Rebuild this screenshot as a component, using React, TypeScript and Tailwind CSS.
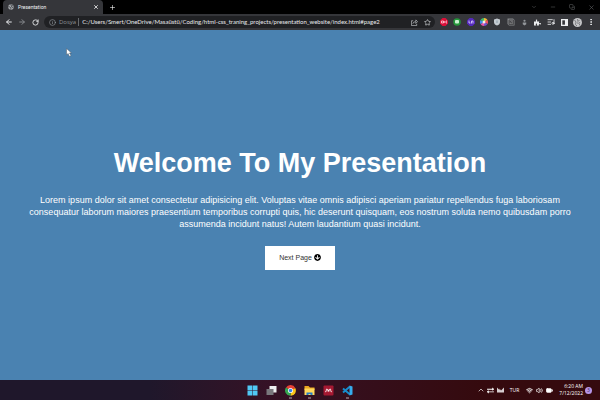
import type { ReactNode } from "react";
import {
  ArrowLeft, ArrowRight, BatteryMedium, ChevronDown, ChevronUp, Copy, Info, ListMusic,
  Minus, MoreVertical, Plus, RotateCw, Star, Volume2, Wifi, X,
} from "lucide-react";
import { FaArrowCircleDown, FaExchangeAlt, FaPuzzlePiece } from "react-icons/fa";

function IconButton({ label, children, className = "w-2" }: { label: string; children: ReactNode; className?: string }) {
  return (
    <button type="button" aria-label={label} className={`flex h-3 shrink-0 items-center justify-center ${className}`}>
      {children}
    </button>
  );
}

function TabStrip() {
  return (
    <header className="flex h-[14px] shrink-0 items-stretch bg-black pl-[3px] pr-[5px] text-white">
      <div className="flex w-[100px] items-center gap-1 rounded-t bg-[#35363a] pl-[5px] pr-[3px]">
        <svg viewBox="0 0 12 12" className="size-[6px] shrink-0">
          <circle cx="6" cy="6" r="5.5" fill="#a5a9ac" />
          <path d="M1 5l3 1 2 2-1 3M5 1l1 2 2 1-1 2 4 2M8 1l1 2 2 1" stroke="#35363a" strokeWidth="1.3" fill="none" />
        </svg>
        <span className="flex-1 font-['Roboto',sans-serif] text-[5px] leading-[8px] text-[#f1f3f4]">Presentation</span>
        <IconButton label="Close tab"><X className="size-[6px]" strokeWidth={3} /></IconButton>
      </div>
      <IconButton label="New tab" className="ml-[5px] w-2 self-center"><Plus className="size-[7px]" strokeWidth={2} /></IconButton>
      <div className="ml-auto flex items-center gap-[11px] text-[#626467]">
        <IconButton label="Search tabs"><ChevronDown className="size-[6px]" /></IconButton>
        <IconButton label="Minimize"><Minus className="size-[6px]" /></IconButton>
        <IconButton label="Restore"><Copy className="size-[6px] -scale-x-100 rotate-90" /></IconButton>
        <IconButton label="Close window"><X className="size-[7px]" /></IconButton>
      </div>
    </header>
  );
}

function Extensions() {
  return (
    <div className="ml-[5px] flex w-[155px] shrink-0 items-center justify-between text-[#eceef0]">
      <IconButton label="Ad blocker">
        <svg viewBox="0 0 16 16" className="size-2">
          <path d="M5 0h6l5 5v6l-5 5H5l-5-5V5z" fill="#db1038" />
          <path d="M6 6H3v4h3M7 6v4h1q2-2 0-4zM14 6h-2v4h2" stroke="#ffdce3" strokeWidth="1.5" fill="none" />
        </svg>
      </IconButton>
      <IconButton label="Page tools">
        <svg viewBox="0 0 16 16" className="size-2">
          <circle cx="8" cy="8" r="7.5" fill="#24963a" />
          <rect x="4" y="4" width="8" height="7" rx="2" fill="#c9efd0" />
        </svg>
      </IconButton>
      <IconButton label="Link extension">
        <svg viewBox="0 0 16 16" className="size-2">
          <path d="M5 0h6l5 5v6l-5 5H5l-5-5V5z" fill="#5429bb" />
          <path d="M4 5v5h3M9 11V6h3v5" stroke="#d7c8ff" strokeWidth="1.8" fill="none" />
        </svg>
      </IconButton>
      <IconButton label="Color picker">
        <svg viewBox="0 0 16 16" className="size-2">
          <path d="M8 8V0a8 8 0 0 1 7 4z" fill="#f4bf35" />
          <path d="M8 8l7-4a8 8 0 0 1 0 8z" fill="#ef5362" />
          <path d="M8 8l7 4a8 8 0 0 1-7 4z" fill="#7754cf" />
          <path d="M8 8v8a8 8 0 0 1-7-4z" fill="#e75aaa" />
          <path d="M8 8l-7 4a8 8 0 0 1 0-8z" fill="#3f91ea" />
          <path d="M8 8L1 4a8 8 0 0 1 7-4z" fill="#43bb6b" />
          <circle cx="8" cy="8" r="3" fill="#f1f1ea" />
        </svg>
      </IconButton>
      <IconButton label="Privacy shield">
        <svg viewBox="0 0 16 16" className="size-2">
          <path d="M8 1l6 2v5q0 5-6 7-6-2-6-7V3z" fill="#c4cbd1" />
          <path d="M8 5v5" stroke="#8c9da9" strokeWidth="2" />
        </svg>
      </IconButton>
      <IconButton label="Notes">
        <svg viewBox="0 0 16 16" className="size-2">
          <path d="M1 1h11l3 3v11H4l-3-3z" fill="#858789" />
          <path d="M4 4h9v9H4zM6 11V6l4 5V6" stroke="#292a2d" strokeWidth="1.2" fill="none" />
        </svg>
      </IconButton>
      <IconButton label="Downloader">
        <svg viewBox="0 0 16 16" className="size-[7px]" fill="#92969a">
          <circle cx="8" cy="4" r="2.5" /><path d="M4 8h8v4l-4 3-4-3z" />
        </svg>
      </IconButton>
      <IconButton label="Extensions"><FaPuzzlePiece className="size-[7px]" /></IconButton>
      <IconButton label="Media controls"><ListMusic className="size-2" strokeWidth={2.5} /></IconButton>
      <IconButton label="Side panel">
        <svg viewBox="0 0 16 16" className="size-[7px]">
          <rect x="1.5" y="1.5" width="13" height="13" fill="none" stroke="currentColor" strokeWidth="3" />
          <path d="M9 2h5v12H9z" fill="currentColor" />
        </svg>
      </IconButton>
      <IconButton label="Profile">
        <svg viewBox="0 0 18 18" className="size-[9px] shrink-0">
          <circle cx="9" cy="9" r="9" fill="#c4c5c7" />
          <path d="M3 4l3 4-1 5 3 3M9 2l1 5 3-3M14 8l-2 3 2 4M8 10h3" stroke="#626367" strokeWidth="1.5" fill="none" />
        </svg>
      </IconButton>
      <IconButton label="Browser menu"><MoreVertical className="size-2" strokeWidth={3} /></IconButton>
    </div>
  );
}

function Toolbar() {
  return (
    <nav aria-label="Browser toolbar" className="flex h-4 shrink-0 items-center bg-[#35363a] px-[5px] text-[#e8eaed]">
      <div className="flex gap-[5px]">
        <IconButton label="Back"><ArrowLeft className="size-2" strokeWidth={3} /></IconButton>
        <IconButton label="Forward"><ArrowRight className="size-2 text-[#85888c]" strokeWidth={3} /></IconButton>
        <IconButton label="Reload"><RotateCw className="size-[7px]" strokeWidth={3} /></IconButton>
      </div>
      <div className="ml-[5px] flex h-3 min-w-0 flex-1 items-center rounded-full bg-[#202124] pl-[5px] pr-[4px] text-[6px] leading-[8px]">
        <Info className="mr-[3px] size-[7px] shrink-0 text-[#9aa0a6]" strokeWidth={2} />
        <label htmlFor="address" className="mr-[3px] border-r border-[#666a6e] pr-[2px] text-[#8e9297]">Dosya</label>
        <input
          id="address"
          className="min-w-0 flex-1 bg-transparent font-['Lato',sans-serif] outline-none"
          defaultValue="C:/Users/Smert/OneDrive/Masaüstü/Coding/html-css_traning_projects/presentation_website/index.html#page2"
        />
        <div className="flex gap-[5px] text-[#c7cacd]">
          <IconButton label="Share">
            <svg viewBox="0 0 16 16" className="size-[7px]" fill="none" stroke="currentColor" strokeWidth="1.5">
              <path d="M5 4H1v11h12v-4M4 11q1-5 7-5V2l4 4-4 4V7" />
            </svg>
          </IconButton>
          <IconButton label="Bookmark"><Star className="size-[7px]" strokeWidth={2.5} /></IconButton>
        </div>
      </div>
      <Extensions />
    </nav>
  );
}

function AppIcons() {
  return (
    <div className="flex items-center gap-2">
      <IconButton label="Start" className="w-[11px]">
        <svg viewBox="0 0 22 22" className="size-[11px]" fill="#50c8f5">
          <path d="M1 1h9.5v9.5H1zM11.5 1H21v9.5h-9.5zM1 11.5h9.5V21H1zM11.5 11.5H21V21h-9.5z" />
        </svg>
      </IconButton>
      <IconButton label="Task view" className="w-[11px]">
        <svg viewBox="0 0 22 22" className="size-[11px]">
          <path d="M7 2h14v13H7z" fill="#eeeeef" /><path d="M1 8h14v12H1z" fill="#79777c" />
        </svg>
      </IconButton>
      <IconButton label="Chrome" className="w-[11px]">
        <svg viewBox="0 -6 22 34" className="h-[17px] w-[11px] shrink-0">
          <path d="M11 11L2 5a10.500 10.500 0 0 1 18.500 1z" fill="#e84235" />
          <path d="M11 11l9.500-5A10.500 10.500 0 0 1 11 21.500z" fill="#fbc21a" />
          <path d="M11 11v10.500A10.500 10.500 0 0 1 2 5z" fill="#36a752" />
          <circle cx="11" cy="11" r="5" fill="#fff" /><circle cx="11" cy="11" r="3.500" fill="#347de8" />
          <path d="M8 25h6v2H8z" fill="#b9a9b1" />
        </svg>
      </IconButton>
      <IconButton label="File Explorer" className="w-[11px]">
        <svg viewBox="0 -6 22 34" className="h-[17px] w-[11px] shrink-0">
          <path d="M1 2h8l3 3h9v5H1z" fill="#eaa720" /><path d="M1 7h20v13H1z" fill="#ffd75c" />
          <path d="M5 20v-5h12v5h-4v-2H9v2z" fill="#257cc7" /><path d="M8 25h6v2H8z" fill="#b9a9b1" />
        </svg>
      </IconButton>
      <IconButton label="Mendeley" className="w-[11px]">
        <svg viewBox="0 0 22 22" className="size-[11px]">
          <rect x="1" y="1" width="20" height="20" rx="2" fill="#a61932" />
          <path d="M4 14q3 0 3-6 4 0 4 5 0-5 4-5 0 6 3 6M8 13l3-3 3 3" stroke="#fff" strokeWidth="1.5" fill="none" />
        </svg>
      </IconButton>
      <IconButton label="Visual Studio Code" className="w-[11px]">
        <svg viewBox="0 -6 22 34" className="h-[17px] w-[11px] shrink-0">
          <path d="M2 7l14 12M2 15L16 3" stroke="#168ccc" strokeWidth="4" />
          <path d="M15 1l6 2v16l-6 2z" fill="#36acec" /><path d="M8 25h6v2H8z" fill="#b9a9b1" />
        </svg>
      </IconButton>
    </div>
  );
}

function Taskbar() {
  return (
    <footer className="grid h-5 shrink-0 grid-cols-[1fr_auto_1fr] items-center bg-linear-to-r from-[#1f172b] from-25% via-[#351125] via-45% to-[#350a0e] to-80% px-2 text-white">
      <div />
      <AppIcons />
      <div className="flex items-center justify-end text-[5px] leading-[7px]">
        <IconButton label="Hidden icons"><ChevronUp className="size-2 text-[#d6cbcd]" strokeWidth={2.5} /></IconButton>
        <IconButton label="Transfer" className="ml-[2px] w-2"><FaExchangeAlt className="size-[7px]" /></IconButton>
        <IconButton label="Input" className="ml-[2px] w-2">
          <svg viewBox="0 0 14 12" className="h-[6px] w-[7px]" fill="#d6ced0"><path d="M0 1l5 5V3l3 4 6-6v10H0z" /></svg>
        </IconButton>
        <span className="ml-[5px] text-white">TUR</span>
        <button type="button" aria-label="Network, sound and battery" className="ml-[7px] flex items-center gap-[3px]">
          <Wifi className="size-[7px]" strokeWidth={3} />
          <Volume2 className="size-[7px]" strokeWidth={2.5} />
          <BatteryMedium className="size-[7px]" fill="currentColor" strokeWidth={3} />
        </button>
        <time className="ml-[6px] text-right">6:20 AM<br />7/12/2022</time>
        <span className="ml-[2px] flex size-[7px] items-center justify-center rounded-full bg-[#b795e8] text-[5px] text-[#332248]">3</span>
      </div>
    </footer>
  );
}

export default function App() {
  return (
    <div className="relative flex min-h-screen flex-col bg-[#4a82b1] font-['Open_Sans',sans-serif]">
      <TabStrip />
      <Toolbar />
      <main className="flex flex-1 flex-col items-center justify-center px-6 pt-[6px] text-center font-['Liberation_Sans',Arial,sans-serif] text-white">
        <h1 className="text-[27px] font-bold leading-8">Welcome To My Presentation</h1>
        <p className="mt-[15px] text-[9px] leading-3">
          Lorem ipsum dolor sit amet consectetur adipisicing elit. Voluptas vitae omnis adipisci aperiam pariatur repellendus fuga laboriosam
          consequatur laborum maiores praesentium temporibus corrupti quis, hic deserunt quisquam, eos nostrum soluta nemo quibusdam porro
          assumenda incidunt natus! Autem laudantium quasi incidunt.
        </p>
        <button type="button" className="mt-4 flex h-6 items-center gap-[2px] bg-white px-[14px] text-[7px] leading-3 text-[#333]">
          Next Page <FaArrowCircleDown className="size-[7px] text-black" />
        </button>
      </main>
      <Taskbar />
      <svg viewBox="0 0 12 18" className="absolute left-[66px] top-[48px] h-[9px] w-[6px]">
        <path d="M1 1v13l3-3 3 6 3-2-3-5h4z" fill="white" stroke="#4c5a68" />
      </svg>
    </div>
  );
}
